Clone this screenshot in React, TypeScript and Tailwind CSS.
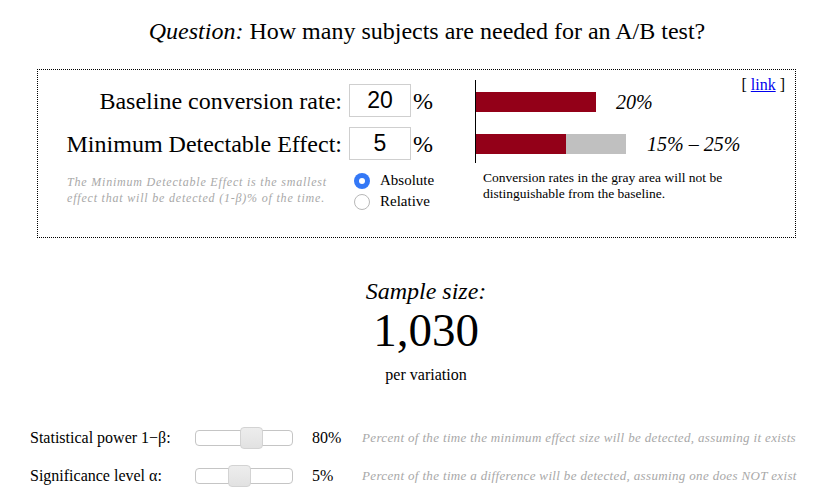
import React from "react";

const serif = { fontFamily: '"Liberation Serif", "Times New Roman", serif' };
const sans = { fontFamily: '"Liberation Sans", Arial, sans-serif' };

function Radio({ checked, label }: { checked: boolean; label: string }) {
  return (
    <div className="flex items-center h-[21px]">
      {checked ? (
        <span className="w-[16px] h-[16px] rounded-full bg-[#3478f6] flex items-center justify-center">
          <span className="w-[6px] h-[6px] rounded-full bg-white" />
        </span>
      ) : (
        <span className="w-[16px] h-[16px] rounded-full border border-[#b8b8b8] bg-white" />
      )}
      <span className="ml-[10px] text-[15px] text-black">{label}</span>
    </div>
  );
}

function Slider({ pos }: { pos: number }) {
  return (
    <div className="relative w-[98px] h-[16px] rounded-[4px] border border-[#c5c5c5] bg-white">
      <div
        className="absolute top-[-4px] w-[23px] h-[22px] rounded-[4px] border border-[#d3d3d3] bg-gradient-to-b from-[#ededed] to-[#e2e2e2]"
        style={{ left: pos }}
      />
    </div>
  );
}

export default function App() {
  return (
    <div className="w-[832px] h-[499px] bg-white text-black overflow-hidden" style={serif}>
      <div className="pt-[16px] text-center text-[24px] leading-[30px] pl-[22px]">
        <i>Question:</i> How many subjects are needed for an A/B test?
      </div>

      <div className="mt-[23px] ml-[37px] w-[759px] h-[169px] border border-dotted border-black flex">
        {/* left */}
        <div className="w-[437px] pt-[14px]">
          <div className="flex items-center h-[33px]">
            <div className="w-[304px] text-right text-[24px] leading-[28px]">Baseline conversion rate:</div>
            <div
              className="ml-[7px] w-[62px] h-[33px] border border-[#cfcfcf] flex items-center justify-center text-[23px]"
              style={sans}
            >
              20
            </div>
            <div className="ml-[2px] text-[24px]">%</div>
          </div>
          <div className="flex items-center h-[33px] mt-[10px]">
            <div className="w-[304px] text-right text-[24px] leading-[28px]">Minimum Detectable Effect:</div>
            <div
              className="ml-[7px] w-[62px] h-[33px] border border-[#cfcfcf] flex items-center justify-center text-[23px]"
              style={sans}
            >
              5
            </div>
            <div className="ml-[2px] text-[24px]">%</div>
          </div>
          <div className="flex mt-[10px]">
            <div className="ml-[29px] w-[275px] mr-[12px] italic text-[12px] leading-[16px] text-[#a8a8a8] tracking-[0.8px] pt-[4px]">
              The Minimum Detectable Effect is the smallest effect that will be detected (1-β)% of the time.
            </div>
            <div className="flex flex-col">
              <Radio checked label="Absolute" />
              <Radio checked={false} label="Relative" />
            </div>
          </div>
        </div>

        {/* right */}
        <div className="flex-1 pt-[10px] flex flex-col">
          <div className="flex">
            <div className="border-l border-black h-[83px] flex flex-col pt-[12px]">
              <div className="flex items-center h-[20px]">
                <div className="w-[120px] h-[20px] bg-[#930018]" />
                <div className="ml-[20px] italic text-[20px]">20%</div>
              </div>
              <div className="flex items-center h-[20px] mt-[22px]">
                <div className="w-[90px] h-[20px] bg-[#930018]" />
                <div className="w-[60px] h-[20px] bg-[#c0c0c0]" />
                <div className="ml-[21px] italic text-[20px]">15% – 25%</div>
              </div>
            </div>
            <div className="ml-auto mr-[10px] -mt-[4px] text-[16px] leading-[18px]">
              [ <a className="text-[#0000ee] underline">link</a> ]
            </div>
          </div>
          <div className="ml-[8px] mt-[7px] text-[13.5px] leading-[16px] w-[280px]">
            Conversion rates in the gray area will not be distinguishable from the baseline.
          </div>
        </div>
      </div>

      <div className="mt-[39px] flex flex-col items-center pl-[20px]">
        <div className="italic text-[24px] leading-[28px]">Sample size:</div>
        <div className="text-[47px] leading-[52px] -mt-[1px]">1,030</div>
        <div className="text-[16px] leading-[20px] mt-[9px]">per variation</div>
      </div>

      <div className="mt-[42px] ml-[30px] flex flex-col gap-[16px]">
        <div className="flex items-center h-[22px]">
          <div className="w-[165px] text-[16px]">Statistical power 1−β:</div>
          <Slider pos={44} />
          <div className="ml-[19px] w-[50px] text-[16px]">80%</div>
          <div className="italic text-[13px] text-[#a8a8a8] tracking-[0.35px]">
            Percent of the time the minimum effect size will be detected, assuming it exists
          </div>
        </div>
        <div className="flex items-center h-[22px]">
          <div className="w-[165px] text-[16px]">Significance level α:</div>
          <Slider pos={32} />
          <div className="ml-[19px] w-[50px] text-[16px]">5%</div>
          <div className="italic text-[13px] text-[#a8a8a8] tracking-[0.35px]">
            Percent of the time a difference will be detected, assuming one does NOT exist
          </div>
        </div>
      </div>
    </div>
  );
}
